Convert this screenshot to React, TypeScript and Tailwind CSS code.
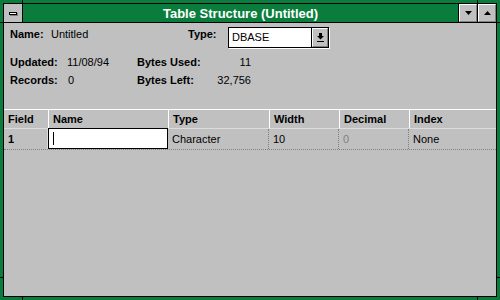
import React from 'react';

const font = { fontFamily: '"Liberation Sans", Arial, sans-serif' };

function Tri({ up = false }: { up?: boolean }) {
  return (
    <svg width="7" height="4" viewBox="0 0 7 4">
      <polygon points={up ? '3.5,0 7,4 0,4' : '0,0 7,0 3.5,4'} fill="#000" />
    </svg>
  );
}

function TitleButton({ up = false }: { up?: boolean }) {
  return (
    <div className="w-[19px] h-full border-l border-black">
      <div className="h-full flex items-center justify-center bg-[#c0c0c0] border-t border-l border-white border-r border-b border-r-[#808080] border-b-[#808080]">
        <Tri up={up} />
      </div>
    </div>
  );
}

const columns = [
  { name: 'Field', w: 'w-[44px]' },
  { name: 'Name', w: 'w-[120px]' },
  { name: 'Type', w: 'w-[101px]' },
  { name: 'Width', w: 'w-[70px]' },
  { name: 'Decimal', w: 'w-[70px]' },
  { name: 'Index', w: 'w-[87px]' },
];

export default function App() {
  return (
    <div className="relative w-[500px] h-[300px] bg-[#0a7d3c] p-[3px] text-[11px] text-black" style={font}>
      {/* frame notches */}
      <div className="absolute left-[22px] top-0 w-px h-[3px] bg-black" />
      <div className="absolute left-[477px] top-0 w-px h-[3px] bg-black" />
      <div className="absolute left-[22px] bottom-0 w-px h-[3px] bg-black" />
      <div className="absolute left-[477px] bottom-0 w-px h-[3px] bg-black" />
      <div className="absolute top-[22px] left-0 h-px w-[3px] bg-black" />
      <div className="absolute top-[277px] left-0 h-px w-[3px] bg-black" />
      <div className="absolute top-[22px] right-0 h-px w-[3px] bg-black" />
      <div className="absolute top-[277px] right-0 h-px w-[3px] bg-black" />

      <div className="h-full flex flex-col border border-black bg-[#c0c0c0]">
        {/* Title bar */}
        <div className="flex h-[19px] border-b border-black bg-[#0a7d3c]">
          <div className="w-[19px] border-r border-black bg-[#c0c0c0] flex items-center justify-center">
            <div className="w-[8px] h-[3px] bg-white border border-black shadow-[1px_1px_0_#808080]" />
          </div>
          <div className="flex-1 flex items-center justify-center text-white font-bold text-[13px] leading-none pt-px">
            Table Structure (Untitled)
          </div>
          <TitleButton />
          <TitleButton up />
        </div>

        {/* Info */}
        <div className="pl-[6px] pt-[4px] leading-[14px]">
          <div className="flex items-start h-[21px]">
            <div className="flex w-[178px]">
              <span className="w-[41px] font-bold">Name:</span>
              <span>Untitled</span>
            </div>
            <span className="w-[40px] font-bold">Type:</span>
            <div className="w-[101px] h-[21px] flex border border-black bg-white shadow-[1px_1px_0_#ffffff]">
              <div className="flex-1 pl-[3px] pt-[2px] leading-[15px] text-[11px]">DBASE</div>
              <div className="w-[17px] border-l border-black">
                <div className="h-full flex items-center justify-center bg-[#c0c0c0] border-t border-l border-white border-r border-b border-r-[#808080] border-b-[#808080]">
                  <svg width="7" height="9" viewBox="0 0 7 9">
                    <rect x="2" y="0" width="3" height="3" fill="#000" />
                    <polygon points="0,3 7,3 3.5,6.5" fill="#000" />
                    <rect x="0" y="8" width="7" height="1" fill="#000" />
                  </svg>
                </div>
              </div>
            </div>
          </div>

          <div className="flex mt-[7px]">
            <div className="flex w-[127px]">
              <span className="w-[57px] font-bold">Updated:</span>
              <span>11/08/94</span>
            </div>
            <div className="flex w-[114px] justify-between">
              <span className="font-bold">Bytes Used:</span>
              <span>11</span>
            </div>
          </div>
          <div className="flex mt-[4px]">
            <div className="flex w-[127px]">
              <span className="w-[58px] font-bold">Records:</span>
              <span>0</span>
            </div>
            <div className="flex w-[114px] justify-between">
              <span className="font-bold">Bytes Left:</span>
              <span>32,756</span>
            </div>
          </div>
        </div>

        {/* Table */}
        <div className="mt-[22px]">
          <div className="flex h-[20px] border-t border-white border-b border-b-[#dcdcdc]">
            {columns.map((c, i) => (
              <div
                key={c.name}
                className={`${c.w} h-full font-bold leading-[18px] ${i === 0 ? 'pl-[4px]' : 'pl-[4px] border-l border-white'}`}
              >
                {c.name}
              </div>
            ))}
          </div>
          <div className="flex h-[21px] border-b border-dotted border-[#808080]">
            <div className="w-[44px] pl-[4px] font-bold leading-[20px] border-r border-[#dcdcdc]">1</div>
            <div className="w-[120px] -mt-px h-[21px] border border-black bg-white flex items-center pl-[4px]">
              <div className="w-px h-[13px] bg-black" />
            </div>
            <div className="w-[101px] pl-[4px] leading-[20px] border-r border-dotted border-[#808080]">Character</div>
            <div className="w-[70px] pl-[4px] leading-[20px] border-r border-dotted border-[#808080]">10</div>
            <div className="w-[70px] pl-[4px] leading-[20px] text-[#808080] border-r border-dotted border-[#808080]">0</div>
            <div className="w-[87px] pl-[4px] leading-[20px]">None</div>
          </div>
        </div>
      </div>
    </div>
  );
}
